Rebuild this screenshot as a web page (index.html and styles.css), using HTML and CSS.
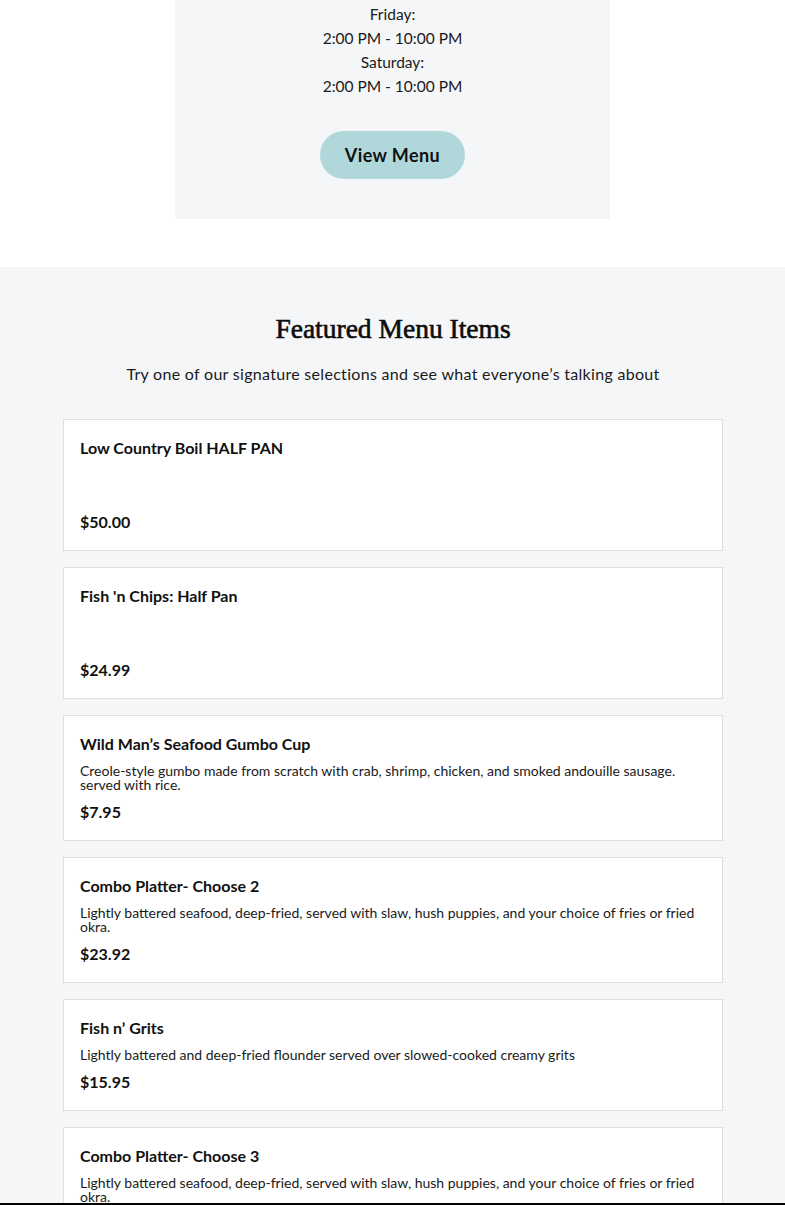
FILE: index.html
```html
<!DOCTYPE html>
<html lang="en">
<head>
<meta charset="utf-8">
<title>Hours and Featured Menu</title>
<link rel="stylesheet" href="styles.css">
</head>
<body>
<section class="hours-wrap">
  <div class="hours-card">
    <p class="line">Thursday:</p>
    <p class="line">2:00 PM - 10:00 PM</p>
    <p class="line">Friday:</p>
    <p class="line">2:00 PM - 10:00 PM</p>
    <p class="line">Saturday:</p>
    <p class="line">2:00 PM - 10:00 PM</p>
    <a class="btn" href="#">View Menu</a>
  </div>
</section>
<section class="featured">
  <h2 class="featured-title">Featured Menu Items</h2>
  <p class="featured-sub">Try one of our signature selections and see what everyone’s talking about</p>
  <div class="items">
    <div class="item">
      <h3 class="item-name">Low Country Boil HALF PAN</h3>
      <p class="item-desc empty"></p>
      <p class="item-price">$50.00</p>
    </div>
    <div class="item">
      <h3 class="item-name">Fish 'n Chips: Half Pan</h3>
      <p class="item-desc empty"></p>
      <p class="item-price">$24.99</p>
    </div>
    <div class="item">
      <h3 class="item-name">Wild Man’s Seafood Gumbo Cup</h3>
      <p class="item-desc">Creole-style gumbo made from scratch with crab, shrimp, chicken, and smoked andouille sausage. served with rice.</p>
      <p class="item-price">$7.95</p>
    </div>
    <div class="item">
      <h3 class="item-name">Combo Platter- Choose 2</h3>
      <p class="item-desc">Lightly battered seafood, deep-fried, served with slaw, hush puppies, and your choice of fries or fried okra.</p>
      <p class="item-price">$23.92</p>
    </div>
    <div class="item">
      <h3 class="item-name">Fish n’ Grits</h3>
      <p class="item-desc">Lightly battered and deep-fried flounder served over slowed-cooked creamy grits</p>
      <p class="item-price">$15.95</p>
    </div>
    <div class="item">
      <h3 class="item-name">Combo Platter- Choose 3</h3>
      <p class="item-desc">Lightly battered seafood, deep-fried, served with slaw, hush puppies, and your choice of fries or fried okra.</p>
      <p class="item-price">$35.88</p>
    </div>
  </div>
</section>
<div class="bottom-edge"></div>
</body>
</html>
```
FILE: styles.css
```css
html, body {
  margin: 0;
  padding: 0;
  background: #ffffff;
  color: #111111;
  font-family: Lato, "Open Sans", sans-serif;
}

.hours-wrap {
  display: flex;
  justify-content: center;
  padding-bottom: 48px;
}

.hours-card {
  width: 435px;
  margin-top: -86px;
  padding: 40px 0;
  background: #f5f6f7;
  display: flex;
  flex-direction: column;
  align-items: center;
}

.line {
  margin: 0;
  font-size: 15.5px;
  line-height: 24px;
  color: #1a1a1a;
}

.btn {
  margin-top: 33px;
  width: 145px;
  height: 48px;
  border-radius: 24px;
  background: #b0d8da;
  color: #111111;
  font-weight: 700;
  font-size: 18px;
  letter-spacing: 0.4px;
  text-decoration: none;
  display: flex;
  align-items: center;
  justify-content: center;
}

.featured {
  background: #f5f6f8;
  padding: 44px 62px 40px 63px;
  display: flex;
  flex-direction: column;
  align-items: center;
}

.featured-title {
  margin: 0;
  font-family: "Liberation Serif", "DejaVu Serif", serif;
  font-weight: 400;
  font-size: 27.5px;
  line-height: 36px;
  color: #0d0d0d;
  -webkit-text-stroke: 0.6px #0d0d0d;
}

.featured-sub {
  margin: 15px 0 0;
  font-size: 16px;
  line-height: 24px;
  letter-spacing: 0.3px;
  color: #1a1a1a;
}

.items {
  margin-top: 33px;
  align-self: stretch;
  display: flex;
  flex-direction: column;
  gap: 16px;
}

.item {
  background: #ffffff;
  border: 1px solid #dcdee0;
  padding: 16px;
}

.item-name {
  margin: 0;
  font-size: 16px;
  line-height: 24px;
  font-weight: 700;
  color: #111111;
}

.item-desc {
  margin: 8px 0 0;
  font-size: 14px;
  line-height: 14px;
  color: #1a1a1a;
}

.item-desc.empty {
  height: 34px;
}

.item-price {
  margin: 8px 0 0;
  font-size: 16px;
  line-height: 24px;
  font-weight: 700;
  color: #111111;
}

.bottom-edge {
  position: fixed;
  left: 0;
  right: 0;
  bottom: 0;
  height: 2px;
  background: #000000;
}
```
